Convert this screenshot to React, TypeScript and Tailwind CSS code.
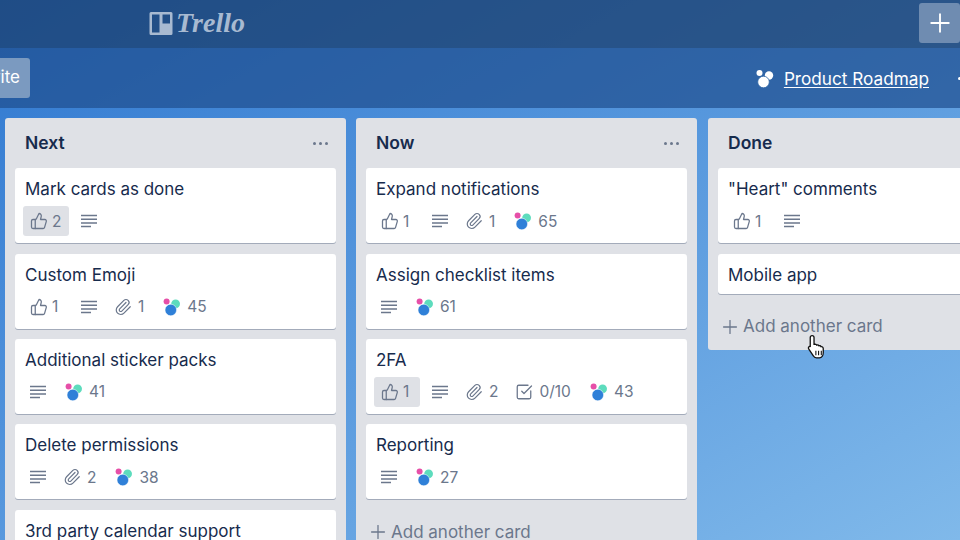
import { ThumbsUp, Paperclip, SquareCheckBig, Plus } from 'lucide-react'

type CardData = {
  title: string
  votes?: number
  voted?: boolean
  desc?: boolean
  clips?: number
  checks?: string
  score?: number
}

const NEXT: CardData[] = [
  { title: 'Mark cards as done', votes: 2, voted: true, desc: true },
  { title: 'Custom Emoji', votes: 1, desc: true, clips: 1, score: 45 },
  { title: 'Additional sticker packs', desc: true, score: 41 },
  { title: 'Delete permissions', desc: true, clips: 2, score: 38 },
  { title: '3rd party calendar support', desc: true, score: 30 },
]

const NOW: CardData[] = [
  { title: 'Expand notifications', votes: 1, desc: true, clips: 1, score: 65 },
  { title: 'Assign checklist items', desc: true, score: 61 },
  { title: '2FA', votes: 1, voted: true, desc: true, clips: 2, checks: '0/10', score: 43 },
  { title: 'Reporting', desc: true, score: 27 },
]

const DONE: CardData[] = [
  { title: '"Heart" comments', votes: 1, desc: true },
  { title: 'Mobile app' },
]

function Lines() {
  return (
    <svg width="16" height="14" viewBox="0 0 16 14" className="text-[#6b778c]">
      <path d="M0 1.500h16M0 5.200h16M0 8.900h16M0 12.600h10" stroke="currentColor" strokeWidth="1.500" />
    </svg>
  )
}

function Dots() {
  return (
    <svg width="18" height="18" viewBox="0 0 18 18">
      <circle cx="3.600" cy="3.400" r="3" fill="#e64fa8" />
      <circle cx="12.600" cy="5.800" r="4.400" fill="#5ddcbd" />
      <circle cx="7.800" cy="12" r="5.800" fill="#2f80d8" stroke="#fff" strokeWidth="0.500" />
    </svg>
  )
}

function Card({ card }: { card: CardData }) {
  const hasBadges = card.votes || card.desc || card.clips || card.score
  return (
    <div className="rounded-[3px] bg-white px-[10px] pb-[7px] pt-[9px] shadow-[0_1px_0_#a3abba]">
      <div className="text-[17px] leading-6 text-[#172b4d]">{card.title}</div>
      {hasBadges ? (
        <div className="ml-[-2px] mt-[5px] flex h-[30px] items-center gap-[5px] text-[15.500px] text-[#6b778c]">
          {card.votes ? (
            <div className={`flex h-[30px] w-[46px] items-center gap-[4px] rounded-[3px] pl-[7px] ${card.voted ? 'bg-[#dfe1e6]' : ''}`}>
              <ThumbsUp size={18} strokeWidth={1.7} />
              <span>{card.votes}</span>
            </div>
          ) : null}
          {card.desc ? (
            <div className="flex items-center px-[7px]">
              <Lines />
            </div>
          ) : null}
          {card.clips ? (
            <div className="ml-[-2px] flex items-center gap-[6px] px-[7px]">
              <Paperclip size={18} strokeWidth={1.6} />
              <span>{card.clips}</span>
            </div>
          ) : null}
          {card.checks ? (
            <div className="ml-[-2px] flex items-center gap-[6px] px-[7px]">
              <SquareCheckBig size={18} strokeWidth={1.7} />
              <span>{card.checks}</span>
            </div>
          ) : null}
          {card.score ? (
            <div className="flex items-center gap-[6px] px-[7px]">
              <Dots />
              <span>{card.score}</span>
            </div>
          ) : null}
        </div>
      ) : null}
    </div>
  )
}

function List({ title, cards, className = '' }: { title: string; cards: CardData[]; className?: string }) {
  return (
    <div className={`w-[341px] shrink-0 self-start rounded-[3px] bg-[#dfe1e6] px-[10px] ${className}`}>
      <div className="flex h-[50.200px] items-center justify-between pl-[10px] pr-[8px]">
        <span className="text-[17.500px] font-semibold text-[#172b4d]">{title}</span>
        <span className="flex gap-[3px]">
          <i className="h-[3px] w-[3px] rounded-full bg-[#6b778c]" />
          <i className="h-[3px] w-[3px] rounded-full bg-[#6b778c]" />
          <i className="h-[3px] w-[3px] rounded-full bg-[#6b778c]" />
        </span>
      </div>
      <div className="flex flex-col gap-[10.400px]">
        {cards.map((c) => (
          <Card key={c.title} card={c} />
        ))}
      </div>
      <div className="mb-[1px] mt-[11px] flex h-[44px] items-center gap-[2px] text-[17px] text-[#6b778c]">
        <Plus size={22} strokeWidth={1.400} className="ml-[1px]" />
        <span>Add another card</span>
      </div>
    </div>
  )
}

export default function App() {
  return (
    <div
      className="relative flex h-[540px] w-[960px] flex-col overflow-hidden bg-linear-to-br from-[#2f78d0] to-[#80b9ea]"
      style={{ fontFamily: 'Inter, "Noto Sans", sans-serif' }}
    >
      <header className="flex h-[48px] shrink-0 items-center bg-[#1b3f6d]/75 pl-[149px]">
        <svg width="24" height="24" viewBox="0 0 24 24" className="mb-[2px]">
          <path
            fillRule="evenodd"
            d="M2 1h20a1.500 1.500 0 0 1 1.500 1.500v20a1.500 1.500 0 0 1-1.500 1.500H2a1.500 1.500 0 0 1-1.500-1.500v-20A1.500 1.500 0 0 1 2 1ZM3 3.500v18h7.500v-18ZM13.500 3.500v9h7.500v-9Z"
            fill="#a8bad1"
          />
        </svg>
        <span
          className="mb-[2px] ml-[3px] text-[28px] font-bold italic leading-none text-[#a8bad1]"
          style={{ fontFamily: '"Liberation Serif", serif' }}
        >
          Trello
        </span>
        <div className="mb-[2px] ml-auto flex h-[40px] w-[41px] items-center justify-center rounded-[3px] bg-[#6f8cb1] text-white">
          <Plus size={30} strokeWidth={1.500} />
        </div>
      </header>
      <div className="flex h-[60px] shrink-0 items-center bg-[#1f4f8f]/70">
        <div className="ml-[-48px] flex h-[40px] w-[78px] items-center justify-end rounded-[3px] bg-[#7b9ac0] pr-[10px] text-[17px] text-white">
          Invite
        </div>
        <svg className="ml-auto mt-[1px]" width="18" height="18" viewBox="0 0 18 18" fill="#fff">
          <circle cx="3.500" cy="3" r="3" />
          <circle cx="13" cy="5.500" r="4.200" />
          <circle cx="7.500" cy="12" r="5.800" stroke="#2f66a4" strokeWidth="0.800" />
        </svg>
        <span className="ml-[10px] mt-[1px] text-[17.200px] text-white underline underline-offset-2">Product Roadmap</span>
        <span className="ml-[29px] mr-[-13px] flex gap-[3px]">
          <i className="h-[3px] w-[3px] rounded-full bg-white" />
          <i className="h-[3px] w-[3px] rounded-full bg-white" />
          <i className="h-[3px] w-[3px] rounded-full bg-white" />
        </span>
      </div>
      <main className="flex min-h-0 flex-1 items-start gap-[10px] pl-[5px] pt-[10px]">
        <List title="Next" cards={NEXT} />
        <List title="Now" cards={NOW} />
        <List title="Done" cards={DONE} className="ml-px" />
      </main>
      <svg className="absolute left-[806px] top-[334px]" width="23" height="26" viewBox="0 0 20 24">
        <path
          d="M5 1.500c1 0 1.800.7 1.800 1.800v6.200l1-.2c.8 0 1.300.4 1.500 1 .7-.3 1.600-.1 2 .6.800-.3 1.700 0 2 .8.900-.2 2 .4 2 1.700v4c0 2.500-1.500 4.600-3.500 4.600H9c-1.500 0-2.300-.8-3-2L2 14c-.7-1-.4-2 .3-2.400.7-.4 1 .4 1 .4V3.300C3.300 2.200 4 1.500 5 1.500Z"
          fill="#fff"
          stroke="#111"
          strokeWidth="1.200"
        />
        <path d="M8.500 15.500v4M11 15.500v4M13.500 15.500v4" stroke="#111" strokeWidth="1" />
      </svg>
    </div>
  )
}
